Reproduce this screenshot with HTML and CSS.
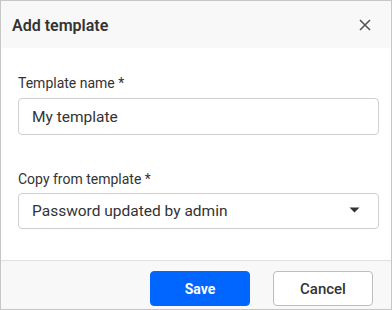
FILE: index.html
```html
<!DOCTYPE html>
<html>
<head>
<meta charset="utf-8">
<link rel="stylesheet" href="styles.css">
</head>
<body>
<div class="dialog">
  <div class="header">
    <div class="title">Add template</div>
    <button class="close" aria-label="Close">
      <svg width="12" height="12" viewBox="0 0 12 12"><path d="M1 1L11 11M11 1L1 11" stroke="#505050" stroke-width="1.5" fill="none"/></svg>
    </button>
  </div>
  <div class="content">
    <div class="field first">
      <div class="label">Template name *</div>
      <div class="input">My template</div>
    </div>
    <div class="field">
      <div class="label">Copy from template *</div>
      <div class="input select">
        <span>Password updated by admin</span>
        <svg class="caret" width="11" height="6" viewBox="0 0 11 6"><path d="M0.5 0.5H10.5L5.5 5.5Z" fill="#333"/></svg>
      </div>
    </div>
  </div>
  <div class="footer">
    <button class="btn primary">Save</button>
    <button class="btn secondary">Cancel</button>
  </div>
</div>
</body>
</html>
```
FILE: styles.css
```css
* { box-sizing: border-box; }
html, body { margin: 0; padding: 0; }
body { font-family: Roboto, "Liberation Sans", sans-serif; color: #333; background: #fff; }
.dialog {
  width: 392px;
  height: 310px;
  border: 1px solid #c6c6c6;
  display: flex;
  flex-direction: column;
  overflow: hidden;
}
.header {
  height: 47px;
  background: #f8f8f8;
  display: flex;
  align-items: center;
  justify-content: space-between;
  padding: 0 17px 0 11px;
}
.title { font-size: 16px; font-weight: 600; color: #333; padding-top: 2px; }
.close {
  border: 0; background: none; padding: 0; width: 18px; height: 18px;
  display: flex; align-items: center; justify-content: center;
}
.content {
  height: 212px;
  background: #fff;
  padding: 25px 12px 0 17px;
}
.field { margin-bottom: 34px; }
.label { font-size: 14px; line-height: 20px; color: #333; margin-bottom: 5px; }
.field:not(.first) .label { margin-bottom: 4px; }
.input {
  height: 37px;
  border: 1px solid #cfcfcf;
  border-radius: 4px;
  padding: 0 13px;
  font-size: 15.5px;
  display: flex;
  align-items: center;
  color: #333;
}
.select { height: 36px; justify-content: space-between; padding-right: 18px; }
.caret { margin-top: -2px; }
.footer {
  flex: 1;
  background: #f8f8f8;
  border-top: 1px solid #e0e0e0;
  display: flex;
  justify-content: flex-end;
  gap: 23px;
  padding: 10px 18px 0 0;
}
.btn {
  width: 100px;
  height: 35px;
  border-radius: 4px;
  font-family: Roboto, "Liberation Sans", sans-serif;
  font-size: 15px;
  font-weight: 500;
}
.primary { background: #0066ff; border: 1px solid #0066ff; color: #fff; font-weight: 700; font-size: 14px; }
.secondary { background: #fff; border: 1px solid #bdbdbd; color: #333; }
```
